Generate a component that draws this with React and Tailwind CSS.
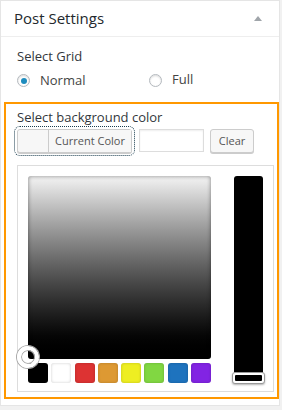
import React from "react";

const swatches = ["#000000", "#ffffff", "#dd3333", "#dd9933", "#eeee22", "#81d742", "#1e73be", "#8224e3"];

function Radio({ checked, label }) {
  return (
    <label className="flex items-center gap-[10px]">
      <span className="w-[13px] h-[13px] rounded-full border border-[#b4b9be] bg-white shadow-[inset_0_1px_2px_rgba(0,0,0,0.15)] flex items-center justify-center">
        {checked && <span className="w-[6px] h-[6px] rounded-full bg-[#1e8cbe]" />}
      </span>
      <span className="text-[13px] text-[#444]">{label}</span>
    </label>
  );
}

export default function App() {
  return (
    <div className="w-[282px] h-[410px] bg-[#f1f1f1] font-['Open_Sans',sans-serif] text-[#23282d]">
      <div className="w-[280px] bg-white border border-[#e5e5e5] pb-[6px]">
        {/* header */}
        <div className="h-[36px] border-b border-[#eee] flex items-center justify-between pl-[13px] pr-[17px]">
          <h2 className="text-[15px] leading-none">Post Settings</h2>
          <span className="w-0 h-0 border-l-[4px] border-r-[4px] border-b-[5px] border-l-transparent border-r-transparent border-b-[#a0a5aa]" />
        </div>

        {/* grid select */}
        <div className="pl-[16px] pt-[10px]">
          <p className="text-[13px] leading-[18px] text-[#32373c]">Select Grid</p>
          <div className="flex mt-[6px] h-[18px]">
            <div className="w-[132px]"><Radio checked label="Normal" /></div>
            <Radio label="Full" />
          </div>
        </div>

        {/* background color */}
        <div className="ml-[3px] w-[275px] mt-[13px] border-2 border-[#ff9800] pt-[4px] pb-[5px]">
          <p className="pl-[11px] text-[13px] leading-[18px] text-[#32373c]">Select background color</p>
          <div className="flex items-start pl-[11px] mt-[3px]">
            <button className="w-[115px] h-[24px] flex rounded-[3px] border border-[#ccc] bg-[#f7f7f7] shadow-[0_1px_0_#ccc] outline outline-1 outline-dotted outline-[#1a3d4e] outline-offset-[2px]">
              <span className="w-[31px] h-full border-r border-[#ccc] bg-[#f7f7f7] rounded-l-[3px]" />
              <span className="flex-1 h-full flex items-center justify-center text-[11px] text-[#555] bg-[#f7f7f7]">Current Color</span>
            </button>
            <div className="ml-[7px] w-[65px] h-[23px] border border-[#ddd] bg-white shadow-[inset_0_1px_2px_rgba(0,0,0,0.07)]" />
            <button className="ml-[6px] w-[44px] h-[24px] rounded-[3px] border border-[#ccc] bg-[#f7f7f7] shadow-[0_1px_0_#ccc] text-[11px] text-[#555]">Clear</button>
          </div>

          {/* picker */}
          <div className="relative ml-[11px] mt-[12px] w-[257px] h-[227px] border border-[#ddd] bg-white flex pl-[10px] pt-[10px]">
            <div className="w-[183px]">
              <div className="w-[183px] h-[183px] rounded-[3px] bg-gradient-to-b from-[#f4f4f4] to-black shadow-[inset_0_0_4px_rgba(0,0,0,0.45)]" />
              <div className="flex justify-between mt-[4px]">
                {swatches.map((c) => (
                  <span
                    key={c}
                    className="w-[20px] h-[20px] rounded-[3px] shadow-[inset_0_0_3px_rgba(0,0,0,0.2)]"
                    style={{ backgroundColor: c }}
                  />
                ))}
              </div>
            </div>
            <div className="relative ml-[23px] w-[29px] h-[201px] rounded-[3px] bg-black">
              <span className="absolute left-[-2px] bottom-[-7px] w-[33px] h-[12px] rounded-[3px] bg-white border border-[#999] shadow-[0_1px_2px_rgba(0,0,0,0.3)] p-[2px]">
                <span className="block w-full h-full bg-black rounded-[1px]" />
              </span>
            </div>
            <span className="absolute left-[-1px] top-[180px] w-[22px] h-[22px] rounded-full border-[4px] border-white shadow-[0_0_0_1px_#aaa,inset_0_0_0_1px_#aaa] bg-transparent" />
          </div>
        </div>
      </div>
    </div>
  );
}
